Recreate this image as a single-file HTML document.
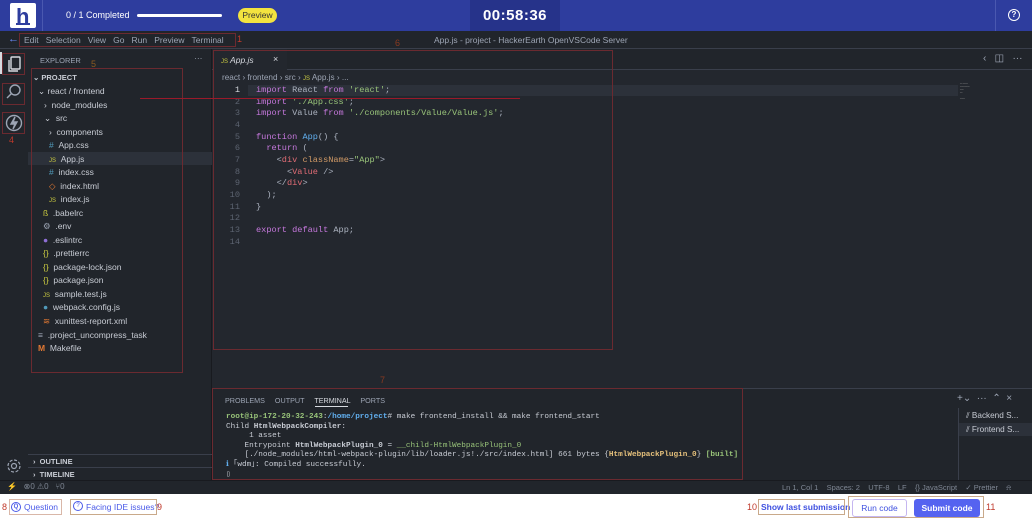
<!DOCTYPE html>
<html><head><meta charset="utf-8"><style>
*{margin:0;padding:0;box-sizing:border-box}
body{width:1032px;height:520px;overflow:hidden;background:#23272e;font-family:"Liberation Sans",sans-serif;position:relative}
.a{position:absolute;white-space:nowrap}
pre.a{white-space:pre}
.mono{font-family:"Liberation Mono",monospace}
.ann{position:absolute;border:1px solid #6b2a30}
.sb{color:#c8ccd4;font-size:8.5px}
.code{font-size:8.6px;color:#abb2bf}
.k{color:#c678dd}.s{color:#98c379}.f{color:#61afef}.t{color:#e06c75}.at{color:#d19a66}
.ln{color:#5c6370;font-size:8.6px;text-align:right;width:20px}
.term{font-size:7.7px;color:#c8ccd4}
</style></head><body>
<!-- top bar -->
<div class="a" style="left:0;top:0;width:1032px;height:31px;background:#2e3d9e"></div>
<div class="a" style="left:10px;top:3px;width:26px;height:25px;background:#fff;border-radius:2px"></div>
<div class="a" style="left:16px;top:4px;font:bold 22px 'Liberation Sans';color:#2e3d9e">h</div>
<div class="a" style="left:16px;top:23px;width:14px;height:2px;background:#2e3d9e"></div>
<div class="a" style="left:42px;top:0;width:1px;height:31px;background:#4a58b0"></div>
<div class="a" style="left:66px;top:10px;font-size:9px;color:#fff">0 / 1 Completed</div>
<div class="a" style="left:137px;top:14px;width:85px;height:3px;background:#fff;border-radius:2px"></div>
<div class="a" style="left:238px;top:8px;width:39px;height:15px;background:#f3e33f;border-radius:8px;font-size:8.5px;color:#333;text-align:center;line-height:15px">Preview</div>
<div class="a" style="left:470px;top:0;width:90px;height:31px;background:#26338a;color:#fff;font:bold 15px 'Liberation Sans';text-align:center;line-height:31px;letter-spacing:0.5px">00:58:36</div>
<div class="a" style="left:995px;top:0;width:1px;height:31px;background:#4a58b0"></div>
<div class="a" style="left:1008px;top:9px;width:12px;height:12px;border:1.5px solid #fff;border-radius:50%;color:#fff;font:bold 8px 'Liberation Sans';text-align:center;line-height:9px">?</div>
<!-- title bar -->
<div class="a" style="left:0;top:31px;width:1032px;height:18px;background:#21252b;border-bottom:1px solid #3a3f4b"></div>
<div class="a" style="left:8px;top:33px;font-size:11px;color:#6b8cff">←</div>
<div class="a" style="left:24px;top:35px;font-size:8.5px;color:#9da5b4">Edit &nbsp;&nbsp;Selection &nbsp;&nbsp;View &nbsp;&nbsp;Go &nbsp;&nbsp;Run &nbsp;&nbsp;Preview &nbsp;&nbsp;Terminal</div>
<div class="a" style="left:434px;top:35px;font-size:8.5px;color:#9da5b4">App.js - project - HackerEarth OpenVSCode Server</div>
<!-- activity bar -->
<div class="a" style="left:0;top:49px;width:28px;height:431px;background:#21252b"></div>
<div class="a" style="left:0;top:52px;width:2px;height:22px;background:#d7dae0"></div>
<svg class="a" style="left:4px;top:52px" width="20" height="22" viewBox="0 0 20 22" fill="none" stroke="#d7dae0" stroke-width="1.4"><rect x="7" y="5" width="9" height="12" rx="1"/><path d="M5 8v11h9"/></svg>
<svg class="a" style="left:4px;top:82px" width="20" height="20" viewBox="0 0 20 20" fill="none" stroke="#9da5b4" stroke-width="1.4"><circle cx="11" cy="8" r="5"/><path d="M7.5 11.5L3 16"/></svg>
<svg class="a" style="left:4px;top:113px" width="20" height="20" viewBox="0 0 20 20" fill="none" stroke="#9da5b4" stroke-width="1.4"><circle cx="10" cy="10" r="7.5"/><path d="M11 4L7 11h4l-2 5 4-7H9z" fill="#9da5b4"/></svg>
<svg class="a" style="left:5px;top:457px" width="18" height="18" viewBox="0 0 18 18" fill="none" stroke="#9da5b4" stroke-width="1.2"><circle cx="9" cy="9" r="2.5"/><circle cx="9" cy="9" r="6" stroke-dasharray="3 1.7"/></svg>
<!-- sidebar -->
<div class="a" style="left:28px;top:49px;width:184px;height:431px;background:#21252b;border-right:1px solid #181a1f"></div>
<div class="a sb" style="left:40px;top:56px;font-size:7.5px;color:#9da5b4">EXPLORER</div>
<div class="a sb" style="left:194px;top:53px;color:#9da5b4">···</div>
<div class="a sb" style="left:33px;top:73px;font-size:7.5px;font-weight:bold">⌄ PROJECT</div>
<div class="a" style="left:28px;top:152px;width:184px;height:13px;background:#2c313a"></div>
<div class="a sb" style="left:38px;top:86px">⌄ react / frontend</div>
<div class="a sb" style="left:44px;top:100px">› &nbsp;node_modules</div>
<div class="a sb" style="left:44px;top:113px">⌄ &nbsp;src</div>
<div class="a sb" style="left:49px;top:127px">› &nbsp;components</div>
<div class="a sb" style="left:49px;top:140px"><span style="color:#519aba">#</span> &nbsp;App.css</div>
<div class="a sb" style="left:49px;top:154px"><span style="color:#cbcb41;font-size:6px">JS</span> &nbsp;App.js</div>
<div class="a sb" style="left:49px;top:167px"><span style="color:#519aba">#</span> &nbsp;index.css</div>
<div class="a sb" style="left:49px;top:181px"><span style="color:#e37933">◇</span> &nbsp;index.html</div>
<div class="a sb" style="left:49px;top:194px"><span style="color:#cbcb41;font-size:6px">JS</span> &nbsp;index.js</div>
<div class="a sb" style="left:43px;top:208px"><span style="color:#cbcb41">ß</span> &nbsp;.babelrc</div>
<div class="a sb" style="left:43px;top:221px"><span style="color:#9da5b4">⚙</span> &nbsp;.env</div>
<div class="a sb" style="left:43px;top:235px"><span style="color:#8f6fd6">●</span> &nbsp;.eslintrc</div>
<div class="a sb" style="left:43px;top:248px"><span style="color:#cbcb41">{}</span> &nbsp;.prettierrc</div>
<div class="a sb" style="left:43px;top:262px"><span style="color:#cbcb41">{}</span> &nbsp;package-lock.json</div>
<div class="a sb" style="left:43px;top:275px"><span style="color:#cbcb41">{}</span> &nbsp;package.json</div>
<div class="a sb" style="left:43px;top:289px"><span style="color:#cbcb41;font-size:6px">JS</span> &nbsp;sample.test.js</div>
<div class="a sb" style="left:43px;top:302px"><span style="color:#519aba">●</span> &nbsp;webpack.config.js</div>
<div class="a sb" style="left:43px;top:316px"><span style="color:#e37933">≋</span> &nbsp;xunittest-report.xml</div>
<div class="a sb" style="left:38px;top:330px"><span style="color:#9da5b4">≡</span> &nbsp;.project_uncompress_task</div>
<div class="a sb" style="left:38px;top:343px"><span style="color:#e37933;font-weight:bold">M</span> &nbsp;Makefile</div>
<div class="a" style="left:28px;top:454px;width:184px;height:1px;background:#3a3f4b"></div>
<div class="a sb" style="left:33px;top:457px;font-size:7.5px;font-weight:bold">› &nbsp;OUTLINE</div>
<div class="a" style="left:28px;top:467px;width:184px;height:1px;background:#3a3f4b"></div>
<div class="a sb" style="left:33px;top:470px;font-size:7.5px;font-weight:bold">› &nbsp;TIMELINE</div>
<!-- tabs -->
<div class="a" style="left:212px;top:49px;width:820px;height:21px;background:#21252b;border-bottom:1px solid #3a3f4b"></div>
<div class="a" style="left:213px;top:49px;width:74px;height:22px;background:#23272e"></div>
<div class="a" style="left:221px;top:55px;font-size:8.5px;color:#d7dae0;font-style:italic"><span style="color:#cbcb41;font-size:6px;font-style:normal">JS</span> App.js</div>
<div class="a" style="left:273px;top:54px;font-size:9px;color:#d7dae0">×</div>
<div class="a" style="left:983px;top:53px;font-size:10px;color:#9da5b4">‹ &nbsp;&nbsp;◫ &nbsp;&nbsp;···</div>
<div class="a" style="left:222px;top:73px;font-size:8.2px;color:#9da5b4">react › frontend › src › <span style="color:#cbcb41;font-size:6px">JS</span> App.js › ...</div>
<div class="a" style="left:248px;top:85px;width:710px;height:11px;background:#2c313a"></div>
<div class="a" style="left:960px;top:83px;width:30px;height:20px;font-size:2px;color:#888;line-height:3px">━━ ━━━━<br>━━━━━━━━<br>━━━<br>━━<br><br>━━━━</div>
<!-- code -->
<div class="a mono" style="left:220px;top:85px;line-height:11.65px">
<div class="ln" style="color:#d7dae0">1</div><div class="ln">2</div><div class="ln">3</div><div class="ln">4</div><div class="ln">5</div><div class="ln">6</div><div class="ln">7</div><div class="ln">8</div><div class="ln">9</div><div class="ln">10</div><div class="ln">11</div><div class="ln">12</div><div class="ln">13</div><div class="ln">14</div></div>
<pre class="a mono code" style="left:256px;top:85px;line-height:11.65px"><span class="k">import</span> React <span class="k">from</span> <span class="s">'react'</span>;
<span class="k">import</span> <span class="s">'./App.css'</span>;
<span class="k">import</span> Value <span class="k">from</span> <span class="s">'./components/Value/Value.js'</span>;

<span class="k">function</span> <span class="f">App</span>() {
  <span class="k">return</span> (
    &lt;<span class="t">div</span> <span class="at">className</span>=<span class="s">"App"</span>&gt;
      &lt;<span class="t">Value</span> /&gt;
    &lt;/<span class="t">div</span>&gt;
  );
}

<span class="k">export</span> <span class="k">default</span> App;</pre>
<!-- panel -->
<div class="a" style="left:212px;top:388px;width:820px;height:92px;background:#21252b;border-top:1px solid #3a3f4b"></div>
<div class="a" style="left:225px;top:396px;font-size:7.2px;color:#9da5b4">PROBLEMS &nbsp;&nbsp;&nbsp;&nbsp;OUTPUT &nbsp;&nbsp;&nbsp;&nbsp;<span style="color:#d7dae0">TERMINAL</span> &nbsp;&nbsp;&nbsp;&nbsp;PORTS</div>
<div class="a" style="left:315px;top:406px;width:33px;height:1px;background:#d7dae0"></div>
<div class="a" style="left:957px;top:393px;font-size:10px;color:#9da5b4">+⌄ &nbsp;··· &nbsp;⌃ &nbsp;×</div>
<div class="a" style="left:958px;top:408px;width:1px;height:72px;background:#3a3f4b"></div>
<div class="a" style="left:959px;top:423px;width:73px;height:13px;background:#2c313a"></div>
<div class="a" style="left:966px;top:411px;font-size:8.2px;color:#c8ccd4">⫽ Backend S...</div>
<div class="a" style="left:966px;top:425px;font-size:8.2px;color:#c8ccd4">⫽ Frontend S...</div>
<pre class="a mono term" style="left:226px;top:413px;line-height:9.6px"><span style="color:#98c379;font-weight:bold">root@ip-172-20-32-243</span>:<span style="color:#61afef;font-weight:bold">/home/project</span># make frontend_install &amp;&amp; make frontend_start
Child <b>HtmlWebpackCompiler</b>:
     1 asset
    Entrypoint <b>HtmlWebpackPlugin_0</b> = <span style="color:#98c379">__child-HtmlWebpackPlugin_0</span>
    [./node_modules/html-webpack-plugin/lib/loader.js!./src/index.html] 661 bytes {<span style="color:#e5c07b;font-weight:bold">HtmlWebpackPlugin_0</span>} <span style="color:#98c379;font-weight:bold">[built]</span>
<span style="color:#61afef">ℹ</span> ｢wdm｣: Compiled successfully.
▯</pre>
<!-- status bar -->
<div class="a" style="left:0;top:480px;width:1032px;height:14px;background:#21252b;border-top:1px solid #181a1f"></div>
<div class="a" style="left:7px;top:482px;font-size:8px;color:#7f8794">⚡ &nbsp;&nbsp;⊗0 ⚠0 &nbsp;&nbsp;⑂0</div>
<div class="a" style="left:782px;top:483px;font-size:7.5px;color:#7f8794">Ln 1, Col 1 &nbsp;&nbsp;&nbsp;Spaces: 2 &nbsp;&nbsp;&nbsp;UTF-8 &nbsp;&nbsp;&nbsp;LF &nbsp;&nbsp;&nbsp;{} JavaScript &nbsp;&nbsp;&nbsp;✓ Prettier &nbsp;&nbsp;&nbsp;⍾</div>
<!-- bottom bar -->
<div class="a" style="left:0;top:494px;width:1032px;height:26px;background:#fff"></div>
<div class="a" style="left:11px;top:502px;width:10px;height:10px;border:1.3px solid #4a5ae8;border-radius:50%;font:bold 6px 'Liberation Sans';color:#4a5ae8;text-align:center;line-height:8px">Q</div>
<div class="a" style="left:24px;top:502px;font-size:8.5px;color:#4a5ae8">Question</div>
<div class="a" style="left:73px;top:501px;width:10px;height:10px;border:1.2px solid #4a5ae8;border-radius:50%;font:6px 'Liberation Sans';color:#4a5ae8;text-align:center;line-height:8px">?</div>
<div class="a" style="left:86px;top:502px;font-size:8.5px;color:#4a5ae8">Facing IDE issues?</div>
<div class="a" style="left:761px;top:502px;font-size:8.5px;color:#3f51e0;font-weight:bold">Show last submission</div>
<div class="a" style="left:852px;top:499px;width:55px;height:18px;border:1px solid #c5b6f0;border-radius:3px;font-size:8.5px;color:#3f51e0;text-align:center;line-height:16px">Run code</div>
<div class="a" style="left:914px;top:499px;width:66px;height:18px;background:#5563f0;border-radius:3px;font-size:8.5px;color:#fff;text-align:center;line-height:18px;font-weight:bold">Submit code</div>
<!-- annotations -->
<div class="ann" style="left:19px;top:33px;width:217px;height:14px"></div>
<div class="ann" style="left:31px;top:68px;width:152px;height:305px"></div>
<div class="ann" style="left:213px;top:50px;width:400px;height:300px"></div>
<div class="ann" style="left:212px;top:388px;width:531px;height:92px"></div>
<div class="ann" style="left:2px;top:53px;width:23px;height:22px"></div>
<div class="ann" style="left:2px;top:83px;width:23px;height:22px"></div>
<div class="ann" style="left:2px;top:112px;width:23px;height:22px"></div>
<div class="ann" style="left:9px;top:499px;width:53px;height:16px;border-color:#d9b7a8"></div>
<div class="ann" style="left:70px;top:499px;width:87px;height:16px;border-color:#c9a98a"></div>
<div class="ann" style="left:758px;top:499px;width:87px;height:16px;border-color:#c9a98a"></div>
<div class="ann" style="left:848px;top:496px;width:136px;height:22px;border-color:#c9a98a"></div>
<div class="a" style="left:237px;top:34px;font-size:9px;color:#c0392b">1</div>
<div class="a" style="left:395px;top:38px;font-size:9px;color:#8a3a20">6</div>
<div class="a" style="left:91px;top:59px;font-size:9px;color:#8a5a20">5</div>
<div class="a" style="left:9px;top:135px;font-size:9px;color:#c0392b">4</div>
<div class="a" style="left:380px;top:375px;font-size:9px;color:#8a3a20">7</div>
<div class="a" style="left:2px;top:502px;font-size:9px;color:#c0392b">8</div>
<div class="a" style="left:157px;top:502px;font-size:9px;color:#c0392b">9</div>
<div class="a" style="left:747px;top:502px;font-size:9px;color:#c0392b">10</div>
<div class="a" style="left:986px;top:502px;font-size:9px;color:#c0392b">11</div>
<div class="a" style="left:140px;top:98px;width:380px;height:1px;background:#9a1a2a"></div>
</body></html>
